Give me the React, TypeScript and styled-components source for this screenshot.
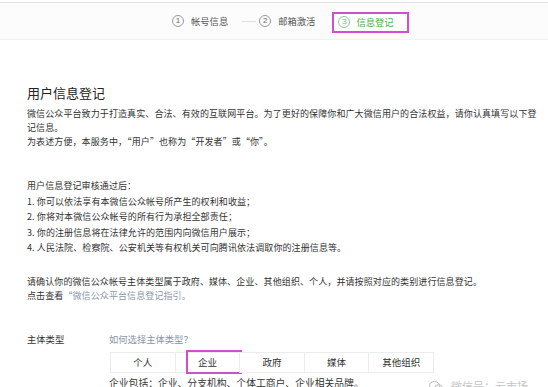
import React from "react";
import styled, { createGlobalStyle } from "styled-components";

const GlobalStyle = createGlobalStyle`
  html, body {
    margin: 0;
    padding: 0;
    background: #fff;
    overflow: hidden;
  }
  body {
    font-family: "Noto Sans CJK SC", "Noto Sans", sans-serif;
    color: #333;
  }
`;

const steps = [
  { num: "1", label: "帐号信息" },
  { num: "2", label: "邮箱激活" },
  { num: "3", label: "信息登记", active: true },
];

const types = ["个人", "企业", "政府", "媒体", "其他组织"];

const App = () => {
  return (
    <Page>
      <GlobalStyle />
      <StepBar>
        {steps.map((s, i) => (
          <React.Fragment key={s.num}>
            {i > 0 && !s.active ? <Dash /> : null}
            <Step $active={s.active}>
              <Circle $active={s.active}>{s.num}</Circle>
              <span>{s.label}</span>
            </Step>
          </React.Fragment>
        ))}
      </StepBar>

      <Content>
        <Title>用户信息登记</Title>

        <Para $top={5}>
          微信公众平台致力于打造真实、合法、有效的互联网平台。为了更好的保障你和广大微信用户的合法权益，请你认真填写以下登记信息。
          <br />
          为表述方便，本服务中，“用户”也称为“开发者”或“你”。
        </Para>

        <List>
          <div>用户信息登记审核通过后：</div>
          <div>1. 你可以依法享有本微信公众帐号所产生的权利和收益；</div>
          <div>2. 你将对本微信公众帐号的所有行为承担全部责任；</div>
          <div>3. 你的注册信息将在法律允许的范围内向微信用户展示；</div>
          <div>4. 人民法院、检察院、公安机关等有权机关可向腾讯依法调取你的注册信息等。</div>
        </List>

        <Para $top={19}>
          请确认你的微信公众帐号主体类型属于政府、媒体、企业、其他组织、个人，并请按照对应的类别进行信息登记。
          <br />
          点击查看<LinkText>“微信公众平台信息登记指引。</LinkText>
        </Para>

        <FormRow>
          <Label>主体类型</Label>
          <Field>
            <Hint>如何选择主体类型？</Hint>
            <Segments>
              {types.map((t) => (
                <Segment key={t}>
                  {t}
                  {t === "企业" ? <Mark /> : null}
                </Segment>
              ))}
            </Segments>
            <Note>企业包括：企业、分支机构、个体工商户、企业相关品牌。</Note>
          </Field>
        </FormRow>
      </Content>

      <Watermark>
        <svg width="14" height="11" viewBox="0 0 14 11">
          <ellipse cx="5.5" cy="4.5" rx="5" ry="4" fill="none" stroke="#bbb" strokeWidth="1" />
          <ellipse cx="9.5" cy="7" rx="4" ry="3.2" fill="none" stroke="#bbb" strokeWidth="1" />
        </svg>
        <span>微信号：云市场</span>
      </Watermark>
    </Page>
  );
};

export default App;

const Page = styled.div`
  position: relative;
  width: 548px;
  height: 387px;
  overflow: hidden;
  background: #fff;
`;

const StepBar = styled.div`
  margin-top: 2px;
  height: 38px;
  border-top: 1px solid #e3e3e3;
  border-bottom: 1px solid #f1f1f1;
  background: #fcfcfc;
  display: flex;
  align-items: center;
  padding-left: 172px;
  box-sizing: border-box;
`;

const Step = styled.div<{ $active?: boolean }>`
  display: flex;
  align-items: center;
  gap: 7px;
  font-size: 9.3px;
  color: ${(p) => (p.$active ? "#48b04a" : "#555")};
  height: 21px;
  box-sizing: border-box;
  ${(p) =>
    p.$active
      ? `
    margin-left: 17px;
    margin-top: 2px;
    width: 77px;
    padding-left: 4px;
    gap: 6px;
    border: 2px solid #cf4fcf;
    background: #fff;
  `
      : ""}
`;

const Circle = styled.span<{ $active?: boolean }>`
  width: 10px;
  height: 10px;
  border-radius: 50%;
  border: 1px solid ${(p) => (p.$active ? "#8ccc8d" : "#999")};
  font-family: "Liberation Sans", sans-serif;
  font-size: 8px;
  line-height: 10px;
  text-align: center;
  color: ${(p) => (p.$active ? "#6bbd6d" : "#666")};
`;

const Dash = styled.span`
  width: 14px;
  height: 1px;
  background: #ddd;
  margin: 0 3px 0 14px;
`;

const Content = styled.div`
  padding: 0 0 0 27px;
`;

const Title = styled.div`
  margin-top: 44px;
  font-size: 13px;
  line-height: 18px;
  color: #222;
`;

const Para = styled.div<{ $top: number }>`
  width: 516px;
  margin-top: ${(p) => p.$top}px;
  font-size: 9px;
  letter-spacing: 0.1px;
  line-height: 14px;
  color: #333;
`;

const List = styled.div`
  margin-top: 29px;
  font-size: 9px;
  letter-spacing: 0.1px;
  line-height: 15.5px;
  color: #333;
`;

const LinkText = styled.span`
  color: #8a97ab;
`;

const FormRow = styled.div`
  display: flex;
  margin-top: 29px;
`;

const Label = styled.div`
  width: 82px;
  flex-shrink: 0;
  font-size: 9.3px;
  line-height: 14px;
  color: #333;
`;

const Field = styled.div`
  display: flex;
  flex-direction: column;
`;

const Hint = styled.div`
  font-size: 9.3px;
  line-height: 14px;
  color: #8a95a6;
`;

const Segments = styled.div`
  display: flex;
  margin-top: 6px;
  margin-left: 2px;
`;

const Segment = styled.div`
  position: relative;
  width: 65.6px;
  height: 21px;
  box-sizing: border-box;
  border: 1px solid #ececec;
  margin-left: -1px;
  display: flex;
  align-items: center;
  justify-content: center;
  font-size: 9.5px;
  color: #333;
  background: #fff;
`;

const Mark = styled.span`
  position: absolute;
  left: 10px;
  right: -3px;
  top: -3px;
  bottom: -2px;
  border: 2px solid #cf4fcf;
`;

const Note = styled.div`
  margin-top: 3px;
  font-size: 9.8px;
  line-height: 14px;
  color: #333;
`;

const Watermark = styled.div`
  position: absolute;
  right: 20px;
  bottom: -7px;
  display: flex;
  align-items: center;
  gap: 8px;
  font-size: 11px;
  color: #c4c4c4;
`;
